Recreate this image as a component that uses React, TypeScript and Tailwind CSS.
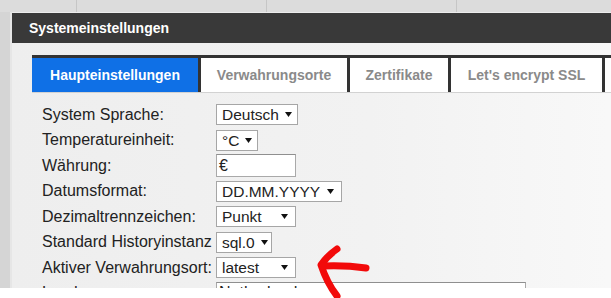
import React from 'react';

type Row = {
    label: string;
    kind: 'select' | 'input';
    value: string;
    width: number;
};

const rows: Row[] = [
    { label: 'System Sprache:', kind: 'select', value: 'Deutsch', width: 82 },
    { label: 'Temperatureinheit:', kind: 'select', value: '°C', width: 42 },
    { label: 'Währung:', kind: 'input', value: '€', width: 80 },
    { label: 'Datumsformat:', kind: 'select', value: 'DD.MM.YYYY', width: 126 },
    { label: 'Dezimaltrennzeichen:', kind: 'select', value: 'Punkt', width: 80 },
    { label: 'Standard Historyinstanz', kind: 'select', value: 'sql.0', width: 56 },
    { label: 'Aktiver Verwahrungsort:', kind: 'select', value: 'latest', width: 80 },
    { label: 'Land:', kind: 'input', value: 'Netherlands', width: 310 },
];

const tabs = [
    { label: 'Haupteinstellungen', width: 'w-[166px]', active: true },
    { label: 'Verwahrungsorte', width: 'w-[146px]' },
    { label: 'Zertifikate', width: 'w-[98px]' },
    { label: "Let's encrypt SSL", width: 'w-[151px]' },
    { label: 'Zusätzlich', width: 'w-[120px]' },
];

function Caret() {
    return (
        <svg width="7" height="5" viewBox="0 0 7 5" className="shrink-0">
            <path d="M0 0h7L3.5 5z" fill="#111" />
        </svg>
    );
}

function Field({ row }: { row: Row }) {
    if (row.kind === 'input') {
        return (
            <div
                className="h-[23px] border border-[#a9a9a9] border-t-[#8f8f8f] bg-white pl-[2px] flex items-center text-[16px] leading-[18px] text-[#222]"
                style={{ width: row.width }}
            >
                {row.value}
            </div>
        );
    }
    return (
        <div
            className="h-[21px] border border-[#a6a6a6] bg-white flex items-center justify-between gap-[6px] pl-[5px] pr-[7px] text-[15.5px] text-[#222]"
            style={{ width: row.width }}
        >
            <span className="whitespace-nowrap">{row.value}</span>
            <Caret />
        </div>
    );
}

export default function App() {
    return (
        <div className="relative w-[611px] h-[298px] overflow-hidden bg-white font-['Liberation_Sans',Arial,sans-serif]">
            <div className="h-[288px] flex flex-col overflow-hidden">
                {/* page behind the dialog */}
                <div className="h-[12px] shrink-0 bg-[#dcdcdc] flex">
                    <div className="w-[77px] border-r border-[#c6c6c6]" />
                    <div className="w-[190px] border-r border-[#c6c6c6]" />
                    <div className="w-[190px] border-r border-[#c6c6c6]" />
                </div>

                <div className="flex flex-1 min-h-0">
                    <div className="w-[10px] shrink-0 bg-[#d5d5d5]" />
                    <div className="w-[2px] shrink-0 bg-[#e6e6e6]" />

                    {/* dialog */}
                    <div className="flex-1 flex flex-col border-t border-[#ececec]">
                        <div className="h-[30px] shrink-0 bg-[#393939] flex items-center pl-[17px] text-[14px] font-bold text-white">
                            Systemeinstellungen
                        </div>

                        <div className="flex-1 bg-linear-to-r from-[#eeeeee] via-[#f2f2f2] to-[#fbfbfb] pl-[20px] pt-[12px]">
                            <div className="h-[38px] flex gap-[3px] pt-[3px] bg-[#333333] border-b border-[#d2d2d2] overflow-hidden">
                                {tabs.map((t) => (
                                    <div
                                        key={t.label}
                                        className={`${t.width} h-[34px] shrink-0 flex items-center justify-center text-[14px] font-bold ${
                                            t.active ? 'bg-[#0f70e6] text-white' : 'bg-white text-[#8a8a8a]'
                                        }`}
                                    >
                                        {t.label}
                                    </div>
                                ))}
                            </div>

                            <div className="pt-[9px] pl-[10px]">
                                {rows.map((r) => (
                                    <div key={r.label} className="h-[25.5px] flex items-center">
                                        <div className="w-[174px] shrink-0 text-[16px] text-[#222]">{r.label}</div>
                                        <Field row={r} />
                                    </div>
                                ))}
                            </div>
                        </div>
                    </div>
                </div>
            </div>

            {/* red hand-drawn annotation arrow */}
            <svg className="absolute inset-0 pointer-events-none" width="611" height="298" viewBox="0 0 611 298">
                <g fill="none" stroke="#f20a0a" strokeWidth="7" strokeLinecap="round" strokeLinejoin="round">
                    <path d="M337 249 Q327 256 321 265 Q327 283 337 296" />
                    <path d="M323 266 Q345 265 366 268" />
                </g>
            </svg>
        </div>
    );
}
